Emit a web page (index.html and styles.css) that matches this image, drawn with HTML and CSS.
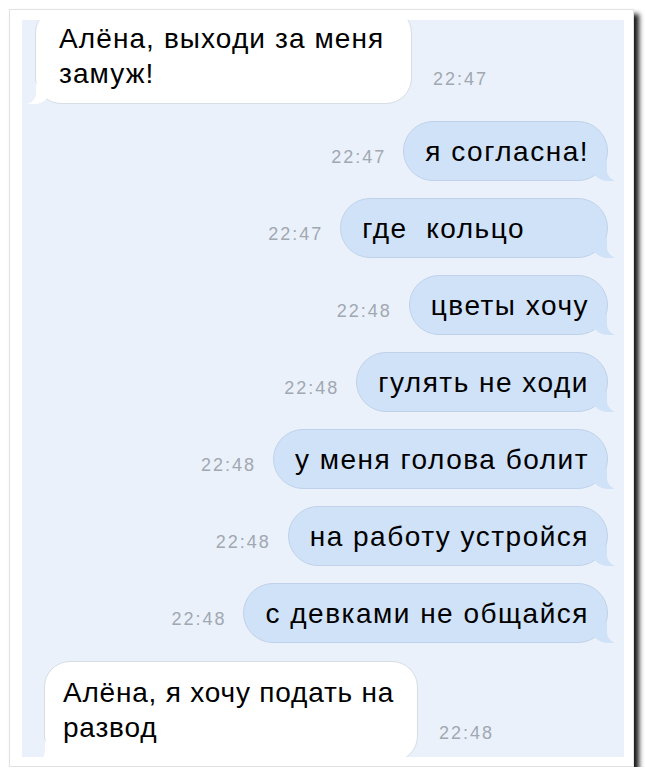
FILE: index.html
```html
<!DOCTYPE html>
<html lang="ru">

<head>
    <meta charset="UTF-8">
    <meta name="viewport" content="width=device-width, initial-scale=1.0">
    <title>Алёна</title>
    <link rel="stylesheet" href="styles.css">
</head>

<body>
    <div class="frame">
        <div class="chat">
            <div class="row in first">
                <div class="bubble in b-first">Алёна, выходи за меня<br>замуж!</div>
                <span class="time">22:47</span>
            </div>
            <div class="row out">
                <span class="time">22:47</span>
                <div class="bubble out">я согласна!</div>
            </div>
            <div class="row out">
                <span class="time">22:47</span>
                <div class="bubble out wide">где&nbsp; кольцо</div>
            </div>
            <div class="row out">
                <span class="time">22:48</span>
                <div class="bubble out">цветы хочу</div>
            </div>
            <div class="row out">
                <span class="time">22:48</span>
                <div class="bubble out">гулять не ходи</div>
            </div>
            <div class="row out">
                <span class="time">22:48</span>
                <div class="bubble out">у меня голова болит</div>
            </div>
            <div class="row out">
                <span class="time">22:48</span>
                <div class="bubble out">на работу устройся</div>
            </div>
            <div class="row out">
                <span class="time">22:48</span>
                <div class="bubble out">с девками не общайся</div>
            </div>
            <div class="row in last">
                <div class="bubble in b-last">Алёна, я хочу подать на<br>развод</div>
                <span class="time">22:48</span>
            </div>
        </div>
    </div>
</body>

</html>
```

FILE: styles.css
```css
* {
    margin: 0;
    padding: 0;
    box-sizing: border-box;
}

body {
    background: #fff;
    font-family: "Liberation Sans", Arial, sans-serif;
    color: #000;
}

.frame {
    margin: 9px 0 0 9px;
    width: 625px;
    height: 758px;
    background: #fff;
    border: 1px solid #e2e2e2;
    box-shadow: 5px 5px 5px rgba(0, 0, 0, 0.9);
    padding: 10px 0 0 12px;
}

.chat {
    width: 602px;
    height: 737px;
    background: #ebf1fa;
    overflow: hidden;
    display: flex;
    flex-direction: column;
    gap: 17px;
}

.row {
    display: flex;
    align-items: flex-end;
    gap: 17px;
}

.row.out {
    justify-content: flex-end;
    padding-right: 16px;
}

.row.in {
    gap: 21px;
}

.row.first {
    margin-top: -13px;
}

.row.last {
    margin-top: 1px;
}

.bubble {
    position: relative;
    font-size: 28px;
    line-height: 35px;
    letter-spacing: 1.5px;
    padding: 12px 18px 11px 21px;
    border-radius: 30px;
    white-space: nowrap;
}

.bubble.out {
    background: #d0e2f8;
    border: 1px solid #bfd2ea;
}

.bubble.in {
    background: #fff;
    border: 1px solid #d7dde5;
    border-radius: 26px;
    padding: 13px 20px 12px 23px;
    letter-spacing: 1.1px;
}

.bubble.b-first {
    margin-left: 13px;
    width: 377px;
}

.bubble.b-last {
    margin-left: 22px;
    width: 374px;
    padding-left: 18px;
    padding-bottom: 16px;
    letter-spacing: 0.8px;
}

.bubble.wide {
    padding-right: 82px;
}

/* tails */
.bubble.out::before {
    content: "";
    position: absolute;
    right: -7px;
    bottom: -1px;
    width: 22px;
    height: 20px;
    background: #d0e2f8;
    border-bottom-left-radius: 16px 14px;
}

.bubble.out::after {
    content: "";
    position: absolute;
    right: -28px;
    bottom: -1px;
    width: 28px;
    height: 22px;
    background: #ebf1fa;
    border-bottom-left-radius: 11px;
}

.bubble.in::before {
    content: "";
    position: absolute;
    left: -8px;
    bottom: -1px;
    width: 22px;
    height: 20px;
    background: #fff;
    border-bottom-right-radius: 16px 14px;
}

.bubble.in::after {
    content: "";
    position: absolute;
    left: -28px;
    bottom: -1px;
    width: 28px;
    height: 22px;
    background: #ebf1fa;
    border-bottom-right-radius: 11px;
}

.time {
    font-size: 18px;
    line-height: 20px;
    letter-spacing: 2px;
    color: #a0a8b2;
    margin-bottom: 14px;
}

.row.in .time {
    margin-bottom: 15px;
}

.row.last .time {
    margin-bottom: 19px;
}
```
